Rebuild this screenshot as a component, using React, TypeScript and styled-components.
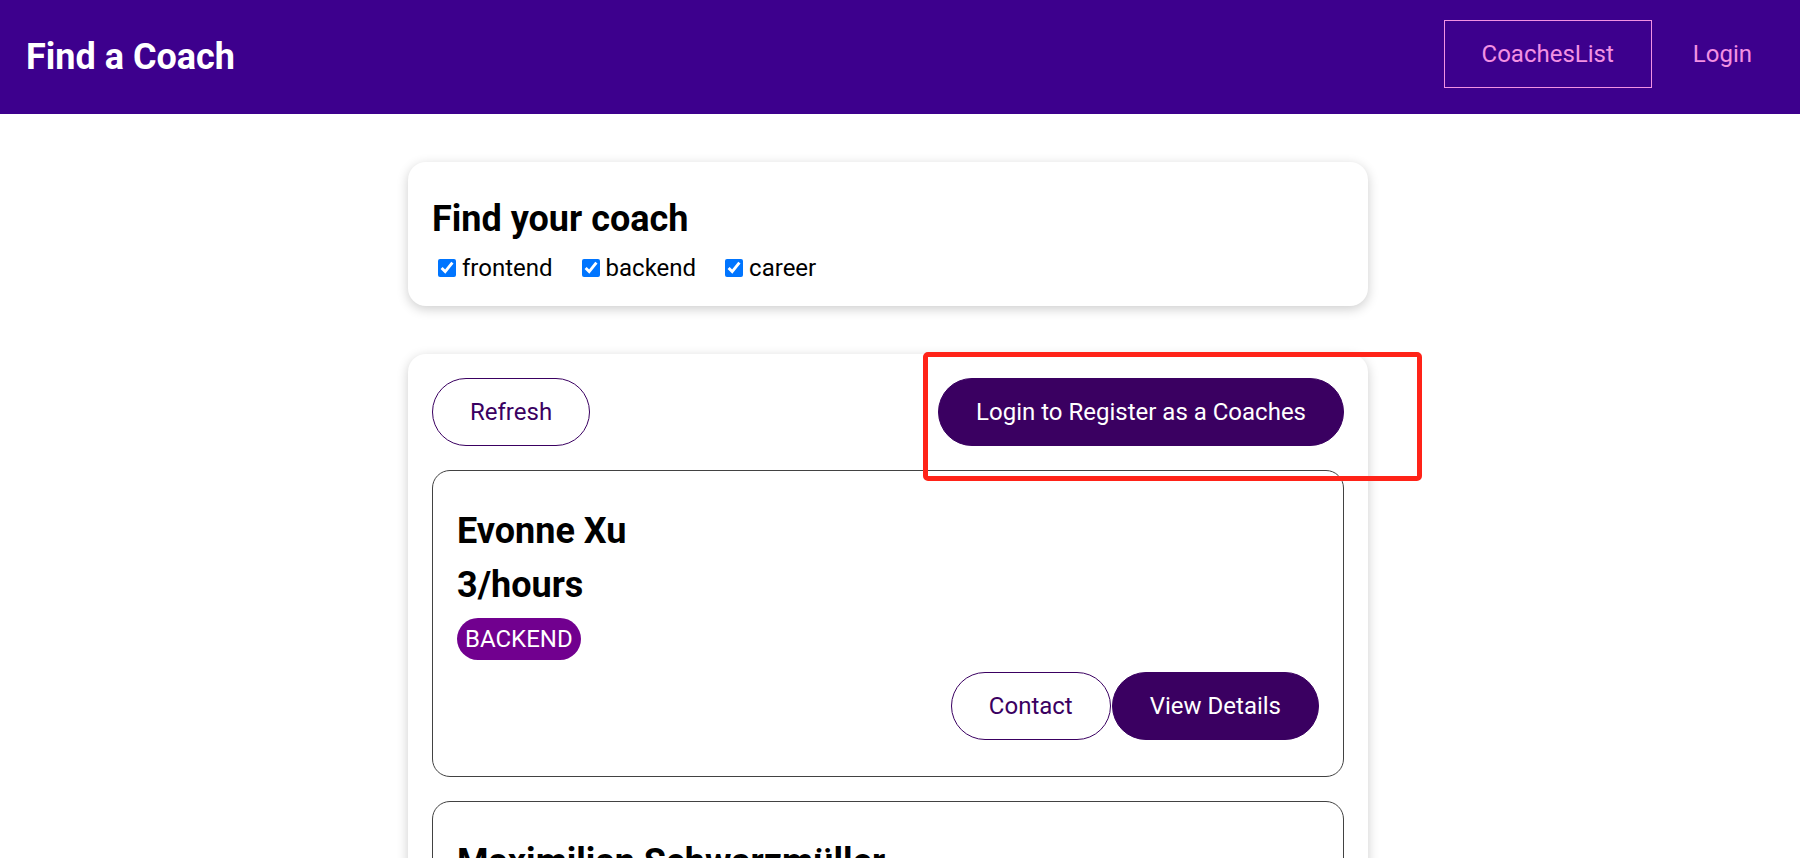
import React from "react";
import styled, { createGlobalStyle } from "styled-components";

const GlobalStyle = createGlobalStyle`
  * {
    box-sizing: border-box;
  }
  html {
    font-family: "Roboto", "Liberation Sans", sans-serif;
    font-size: 24px;
  }
  body {
    margin: 0;
    background: #ffffff;
    color: #000000;
  }
`;

const Header = styled.header`
  width: 100%;
  height: 114px;
  background-color: #3d008d;
  display: flex;
  justify-content: space-between;
  align-items: center;
  padding: 0 10px 0 26px;
`;

const Brand = styled.h1`
  margin: 0;
  font-size: 36px;
  font-weight: 700;
  color: #ffffff;
`;

const Nav = styled.nav`
  margin-bottom: 6px;
`;

const NavList = styled.ul`
  display: flex;
  list-style: none;
  margin: 0;
  padding: 0;
  gap: 3px;
`;

const NavLink = styled.a<{ $active?: boolean }>`
  display: inline-block;
  padding: 20px 37px;
  font-size: 24px;
  line-height: 26px;
  color: #f391e3;
  text-decoration: none;
  border: 1px solid ${({ $active }) => ($active ? "#f391e3" : "transparent")};
`;

const Main = styled.main`
  padding-right: 24px;
`;

const BaseCard = styled.section`
  position: relative;
  max-width: 960px;
  margin: 48px auto;
  padding: 24px;
  border-radius: 18px;
  background: #ffffff;
  box-shadow: 0 3px 12px rgba(0, 0, 0, 0.2);
`;

const FilterTitle = styled.h2`
  margin: 12px 0 14px;
  font-size: 36px;
  font-weight: 700;
`;

const FilterRow = styled.div`
  display: flex;
  align-items: center;
`;

const FilterItem = styled.label`
  display: inline-flex;
  align-items: center;
  font-size: 24px;
  margin-right: 23px;

  input {
    width: 18px;
    height: 18px;
    margin: 0 6px 0 6px;
    accent-color: #0075ff;
  }
`;

const Controls = styled.div`
  display: flex;
  justify-content: space-between;
  align-items: center;
`;

const Button = styled.button<{ $flat?: boolean }>`
  font-family: inherit;
  font-size: 24px;
  line-height: 28px;
  padding: 19px 37px;
  border-radius: 34px;
  border: 1px solid #3a0061;
  cursor: pointer;
  background: ${({ $flat }) => ($flat ? "transparent" : "#3a0061")};
  color: ${({ $flat }) => ($flat ? "#3a0061" : "#ffffff")};
`;

const CoachList = styled.ul`
  list-style: none;
  margin: 0;
  padding: 0;
`;

const CoachItem = styled.li`
  margin: 24px 0;
  padding: 27px 24px 36px;
  border: 1px solid #424242;
  border-radius: 18px;
`;

const CoachName = styled.h3`
  margin: 12px 0;
  font-size: 36px;
  font-weight: 700;
`;

const CoachRate = styled.h4`
  margin: 12px 0;
  font-size: 36px;
  font-weight: 700;
`;

const BadgeRow = styled.div`
  display: flex;
  gap: 12px;
`;

const badgeColors: Record<string, string> = {
  frontend: "#3d008d",
  backend: "#71008f",
  career: "#8d006e",
};

const Badge = styled.span<{ $area: string }>`
  display: inline-block;
  padding: 7px 8px;
  border-radius: 22px;
  font-size: 24px;
  line-height: 28px;
  color: #ffffff;
  text-transform: uppercase;
  background-color: ${({ $area }) => badgeColors[$area] ?? "#3d008d"};
`;

const Actions = styled.div`
  display: flex;
  justify-content: flex-end;
  gap: 1px;
  margin-top: 12px;
`;

const Highlight = styled.div`
  position: absolute;
  left: 515px;
  top: -2px;
  width: 499px;
  height: 129px;
  border: 5px solid #ff2318;
  border-radius: 5px;
  pointer-events: none;
`;

interface Coach {
  id: string;
  firstName: string;
  lastName: string;
  rate: number;
  areas: string[];
}

const coaches: Coach[] = [
  { id: "c1", firstName: "Evonne", lastName: "Xu", rate: 3, areas: ["backend"] },
  { id: "c2", firstName: "Maximilian", lastName: "Schwarzmüller", rate: 30, areas: ["frontend", "backend", "career"] },
];

const filters = ["frontend", "backend", "career"];

const CoachCard: React.FC<{ coach: Coach }> = ({ coach }) => (
  <CoachItem>
    <CoachName>
      {coach.firstName} {coach.lastName}
    </CoachName>
    <CoachRate>{coach.rate}/hours</CoachRate>
    <BadgeRow>
      {coach.areas.map((area) => (
        <Badge key={area} $area={area}>
          {area}
        </Badge>
      ))}
    </BadgeRow>
    <Actions>
      <Button $flat>Contact</Button>
      <Button>View Details</Button>
    </Actions>
  </CoachItem>
);

const App: React.FC = () => (
  <>
    <GlobalStyle />
    <Header>
      <Brand>Find a Coach</Brand>
      <Nav>
        <NavList>
          <li>
            <NavLink $active>CoachesList</NavLink>
          </li>
          <li>
            <NavLink>Login</NavLink>
          </li>
        </NavList>
      </Nav>
    </Header>
    <Main>
      <BaseCard>
        <FilterTitle>Find your coach</FilterTitle>
        <FilterRow>
          {filters.map((f) => (
            <FilterItem key={f}>
              <input type="checkbox" defaultChecked />
              {f}
            </FilterItem>
          ))}
        </FilterRow>
      </BaseCard>
      <BaseCard>
        <Controls>
          <Button $flat>Refresh</Button>
          <Button>Login to Register as a Coaches</Button>
        </Controls>
        <Highlight />
        <CoachList>
          {coaches.map((coach) => (
            <CoachCard key={coach.id} coach={coach} />
          ))}
        </CoachList>
      </BaseCard>
    </Main>
  </>
);

export default App;
